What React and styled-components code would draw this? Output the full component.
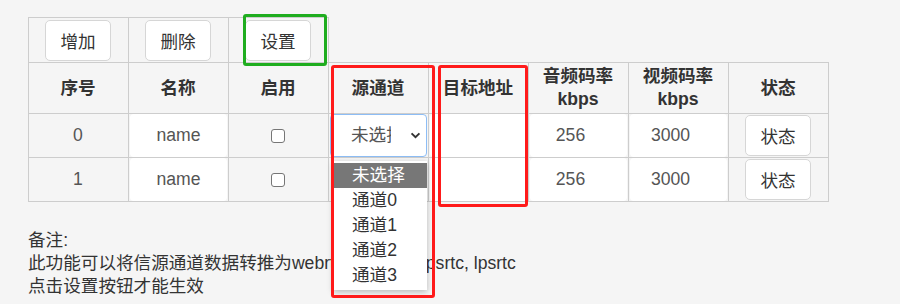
import React from 'react'
import styled, { createGlobalStyle } from 'styled-components'

const GlobalStyle = createGlobalStyle`
    html, body {
        margin: 0;
        padding: 0;
        background: #f5f5f5;
    }
    body {
        font-family: "Liberation Sans", "Noto Sans CJK SC", sans-serif;
        font-size: 17.6px;
        line-height: 23px;
        color: #333;
    }
`

const columns = ['序号', '名称', '启用', '源通道', '目标地址', ['音频码率', 'kbps'], ['视频码率', 'kbps'], '状态']
const rows = [
    { id: 0, name: 'name', audio: 256, video: 3000 },
    { id: 1, name: 'name', audio: 256, video: 3000 }
]
const channelOptions = ['未选择', '通道0', '通道1', '通道2', '通道3']

export default function App() {
    return (
        <>
            <GlobalStyle />
            <Page>
                <Toolbar>
                    <ToolCell>
                        <Button type="button">增加</Button>
                    </ToolCell>
                    <ToolCell>
                        <Button type="button">删除</Button>
                    </ToolCell>
                    <ToolCell>
                        <Button type="button">设置</Button>
                    </ToolCell>
                </Toolbar>

                <Grid>
                    {columns.map((col, i) => (
                        <HeadCell key={i}>
                            {Array.isArray(col) ? col.map((line) => <span key={line}>{line}</span>) : col}
                        </HeadCell>
                    ))}

                    {rows.map((row, r) => (
                        <React.Fragment key={row.id}>
                            <Cell>{row.id}</Cell>
                            <Cell $fill>
                                <TextInput defaultValue={row.name} />
                            </Cell>
                            <Cell>
                                <CheckBox type="checkbox" />
                            </Cell>
                            <Cell $fill>
                                {r === 0 ? (
                                    <SelectWrap>
                                        <FakeSelect>
                                            <SelectText>未选择</SelectText>
                                            <Chevron viewBox="0 0 12 8">
                                                <polyline points="1.5,1.5 6,6 10.5,1.5" />
                                            </Chevron>
                                        </FakeSelect>
                                        <OptionList>
                                            {channelOptions.map((opt, k) => (
                                                <OptionItem key={opt} $active={k === 0}>
                                                    {opt}
                                                </OptionItem>
                                            ))}
                                        </OptionList>
                                    </SelectWrap>
                                ) : (
                                    <FakeSelect $plain />
                                )}
                            </Cell>
                            <Cell $fill>
                                <TextInput defaultValue="" />
                            </Cell>
                            <Cell $fill>
                                <NumberInput defaultValue={row.audio} />
                            </Cell>
                            <Cell $fill>
                                <NumberInput defaultValue={row.video} />
                            </Cell>
                            <Cell>
                                <Button type="button">状态</Button>
                            </Cell>
                        </React.Fragment>
                    ))}
                </Grid>

                <Notes>
                    <div>备注:</div>
                    <div>此功能可以将信源通道数据转推为webrtc, rtmp, ts, lpsrtc, lpsrtc</div>
                    <div>点击设置按钮才能生效</div>
                </Notes>

                <Mark $color="#1fad1f" $top={14} $left={243} $width={84} $height={52} />
                <Mark $color="#ff1a1a" $top={65} $left={331} $width={104} $height={233} />
                <Mark $color="#ff1a1a" $top={65} $left={438} $width={90} $height={142} />
            </Page>
        </>
    )
}

const Page = styled.div`
    position: relative;
    padding: 17px 0 0 28px;
    height: 304px;
    box-sizing: border-box;
`

const Toolbar = styled.div`
    display: grid;
    grid-template-columns: repeat(3, 100px);
    width: max-content;
    border-top: 1px solid #cdcdcd;
    border-left: 1px solid #cdcdcd;
`

const ToolCell = styled.div`
    height: 44px;
    box-sizing: border-box;
    border-right: 1px solid #cdcdcd;
    display: flex;
    align-items: center;
    justify-content: center;
    padding-right: 1px;
`

const Button = styled.button`
    width: 66px;
    height: 41px;
    box-sizing: border-box;
    background: #fff;
    border: 1px solid #d6d6d6;
    border-radius: 5px;
    font-family: inherit;
    font-size: 17.6px;
    color: #333;
    padding: 0;
    cursor: pointer;
`

const Grid = styled.div`
    display: grid;
    grid-template-columns: repeat(8, 100px);
    width: max-content;
    border-top: 1px solid #cdcdcd;
    border-left: 1px solid #cdcdcd;
`

const HeadCell = styled.div`
    height: 51px;
    box-sizing: border-box;
    border-right: 1px solid #cdcdcd;
    border-bottom: 1px solid #cdcdcd;
    display: flex;
    flex-direction: column;
    align-items: center;
    justify-content: center;
    font-weight: bold;
    color: #333;
    padding-right: 1px;
`

const Cell = styled.div`
    height: 44px;
    box-sizing: border-box;
    border-right: 1px solid #cdcdcd;
    border-bottom: 1px solid #cdcdcd;
    display: flex;
    align-items: center;
    justify-content: center;
    padding: ${(p) => (p.$fill ? '0 1px 0 1px' : '0 1px 0 0')};
    color: #555;
    position: relative;
`

const TextInput = styled.input`
    width: 100%;
    height: 43px;
    box-sizing: border-box;
    border: none;
    border-radius: 4px;
    background: #fff;
    font-family: inherit;
    font-size: 17.6px;
    color: #555;
    text-align: center;
    padding: 0;
    outline: none;
    align-self: flex-start;
`

const NumberInput = styled(TextInput).attrs({ type: 'text' })`
    padding-right: 16px;
`

const CheckBox = styled.input`
    appearance: none;
    width: 14px;
    height: 14px;
    margin: 0;
    box-sizing: border-box;
    border: 1.5px solid #767676;
    border-radius: 3px;
    background: #fff;
`

const SelectWrap = styled.div`
    position: relative;
    width: 100%;
    height: 43px;
    align-self: flex-start;
`

const FakeSelect = styled.div`
    width: 100%;
    height: 43px;
    box-sizing: border-box;
    border: 1px solid ${(p) => (p.$plain ? 'transparent' : '#8dbdf5')};
    border-radius: 4px;
    background: ${(p) => (p.$plain ? 'transparent' : '#fff')};
    display: flex;
    align-items: center;
    padding-left: 20px;
    align-self: flex-start;
`

const SelectText = styled.span`
    width: 40px;
    overflow: hidden;
    white-space: nowrap;
    color: #555;
`

const Chevron = styled.svg`
    width: 11px;
    height: 7px;
    margin-left: auto;
    margin-right: 5px;
    fill: none;
    stroke: #333;
    stroke-width: 2.2;
`

const OptionList = styled.div`
    position: absolute;
    top: calc(100% + 4px);
    left: 3px;
    right: 0;
    padding: 2px 0;
    background: #fff;
    box-shadow: 0 2px 6px rgba(0, 0, 0, 0.25);
    z-index: 2;
`

const OptionItem = styled.div`
    height: 25px;
    line-height: 25px;
    overflow: hidden;
    padding-left: 19px;
    color: ${(p) => (p.$active ? '#fff' : '#333')};
    background: ${(p) => (p.$active ? '#777' : 'transparent')};
`

const Notes = styled.div`
    margin-top: 27px;
    color: #333;
`

const Mark = styled.div`
    position: absolute;
    top: ${(p) => p.$top}px;
    left: ${(p) => p.$left}px;
    width: ${(p) => p.$width}px;
    height: ${(p) => p.$height}px;
    box-sizing: border-box;
    border: 3px solid ${(p) => p.$color};
    border-radius: 3px;
    z-index: 5;
    pointer-events: none;
`
